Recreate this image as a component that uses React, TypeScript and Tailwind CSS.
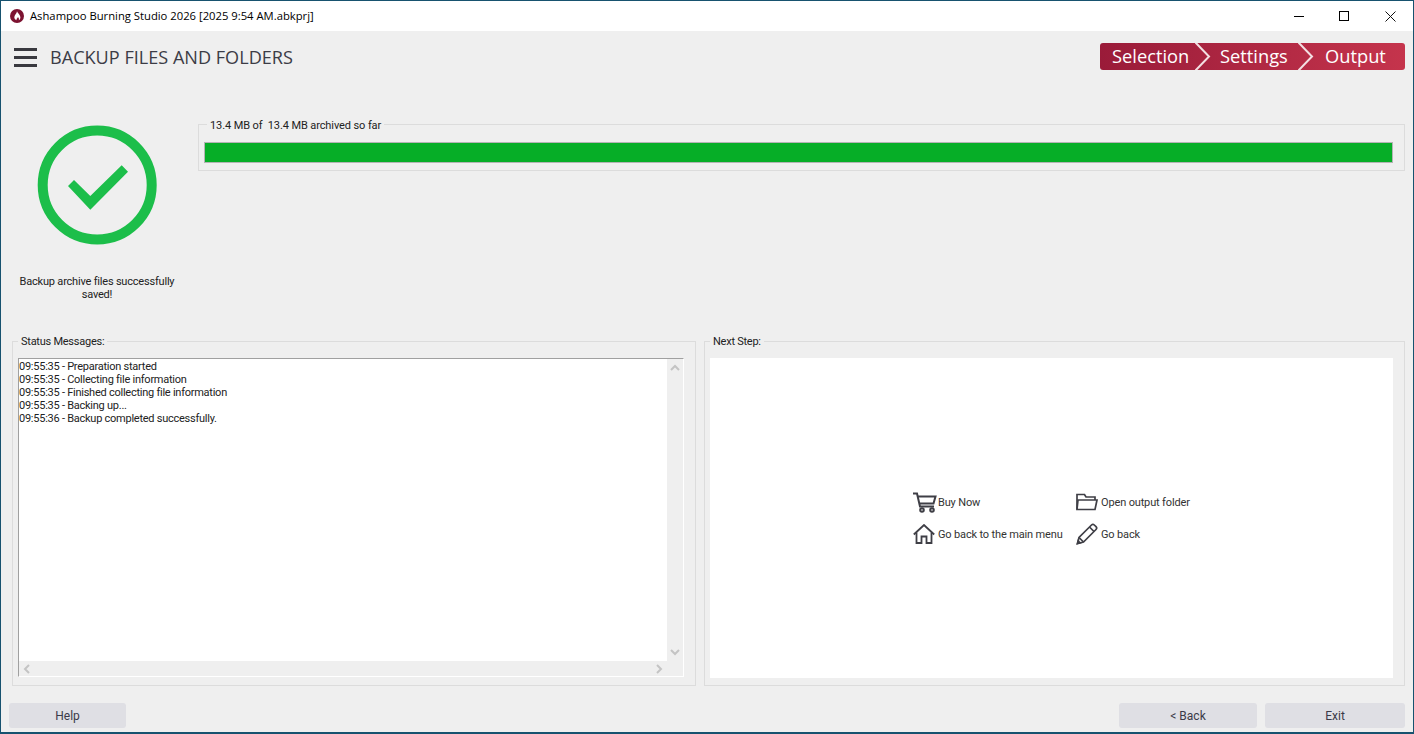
import { ReactNode } from 'react';

const logLines = [
  '09:55:35 - Preparation started',
  '09:55:35 - Collecting file information',
  '09:55:35 - Finished collecting file information',
  '09:55:35 - Backing up...',
  '09:55:36 - Backup completed successfully.',
];

const AppLogo = () => (
  <svg width="14" height="14" viewBox="0 0 14 14" className="shrink-0">
    <circle cx="7" cy="7" r="7" fill="#7c1230" />
    <path d="M7 2.200c.3 1.600 3.400 3.300 3.400 6.200 0 1.200-.6 2.300-1.600 2.900.4-1.100.1-2.200-.9-3.200-.3 1-.9 1.300-1.300 2.100-.2.4-.2.8-.1 1.100-1.300-.6-2.200-1.700-2.200-3.100 0-2.400 2.500-3.500 2.700-6z" fill="#fff" />
  </svg>
);

const CartIcon = () => (
  <svg width="24" height="21" viewBox="0 0 24 21" fill="none" stroke="#3f3f46" strokeWidth="2">
    <path d="M0 1.500h4l3 13h14" />
    <path d="M5 4.500h17.500l-2 7H6.500" />
    <circle cx="9" cy="18" r="1.800" />
    <circle cx="19" cy="18" r="1.800" />
  </svg>
);

const FolderIcon = () => (
  <svg width="22" height="18" viewBox="0 0 22 18" fill="none" stroke="#3f3f46" strokeWidth="1.700">
    <path d="M1 16.500V1.500h7.500l1.500 2.500h9v3" />
    <path d="M1 16.500l1-9.500h19l-2 9.500z" />
  </svg>
);

const HomeIcon = () => (
  <svg width="22" height="20" viewBox="0 0 22 20" fill="none" stroke="#3f3f46" strokeWidth="1.800">
    <path d="M.8 10.500L11 1l10.200 9.500" />
    <path d="M3.500 8.500V19h5v-6.500h5V19h5V8.500" />
  </svg>
);

const PencilIcon = () => (
  <svg width="22" height="22" viewBox="0 0 22 22" fill="none" stroke="#3f3f46" strokeWidth="1.700">
    <path d="M1.500 20.500l1.500-6L15.500 2a2 2 0 0 1 2.800 0l1.700 1.700a2 2 0 0 1 0 2.800L7.500 19z" />
    <path d="M3 14.500L7.500 19" />
    <path d="M13.500 4l4.500 4.500" />
    <path d="M1.500 20.500l2.500-.7-1.800-1.800z" fill="#3f3f46" />
  </svg>
);

const CheckBadge = () => (
  <svg width="120" height="120" viewBox="0 0 120 120" fill="none">
    <circle cx="60.200" cy="60" r="54.500" stroke="#1cbe4a" strokeWidth="10" />
    <polygon points="31,61 37,55 53.300,71 84.700,40.300 91,46.700 53.300,84.700" fill="#1cbe4a" />
  </svg>
);

const Chevron = ({ dir }: { dir: 'up' | 'down' | 'left' | 'right' }) => {
  const paths = {
    up: 'M1 6l4-4 4 4',
    down: 'M1 2l4 4 4-4',
    left: 'M6 1L2 5l4 4',
    right: 'M2 1l4 4-4 4',
  };
  const vertical = dir === 'up' || dir === 'down';
  return (
    <svg
      width={vertical ? 10 : 8}
      height={vertical ? 8 : 10}
      viewBox={vertical ? '0 0 10 8' : '0 0 8 10'}
      fill="none"
      stroke="#c4c4c4"
      strokeWidth="2"
    >
      <path d={paths[dir]} />
    </svg>
  );
};

const Group = ({
  title,
  legendClass,
  className,
  children,
}: {
  title: string;
  legendClass: string;
  className: string;
  children: ReactNode;
}) => (
  <fieldset className={`border border-[#dcdcdc] ${className}`}>
    <legend className={`whitespace-pre px-[3px] text-[11px] leading-[14px] text-[#222] ${legendClass}`}>{title}</legend>
    {children}
  </fieldset>
);

const FooterButton = ({ label, className }: { label: string; className: string }) => (
  <button className={`h-[25px] rounded-[3px] bg-[#dfdfe4] text-[12px] text-[#3a3a48] ${className}`}>{label}</button>
);

const NextAction = ({ icon, label }: { icon: ReactNode; label: string }) => (
  <div className="flex h-[32px] items-center">
    <div className="flex w-[25px] shrink-0 justify-start">{icon}</div>
    <span className="whitespace-nowrap pt-[2px] text-[11px] tracking-[-0.15px] text-[#333]">{label}</span>
  </div>
);

export default function App() {
  return (
    <div className="flex h-[734px] w-[1414px] flex-col overflow-hidden border border-b-2 border-[#17526f] bg-[#efefef] font-['Roboto',sans-serif]">
      {/* title bar */}
      <div className="flex h-[30px] shrink-0 items-center bg-white pl-[9px]">
        <AppLogo />
        <span className="ml-[6px] font-['Open_Sans',sans-serif] text-[11.25px] text-black">
          Ashampoo Burning Studio 2026 [2025 9:54 AM.abkprj]
        </span>
        <div className="ml-auto flex items-center">
          <div className="flex w-[45px] justify-center">
            <div className="h-px w-[10px] bg-black" />
          </div>
          <div className="flex w-[46px] justify-center">
            <div className="h-[10px] w-[10px] border border-black" />
          </div>
          <div className="flex w-[46px] justify-center">
            <svg width="11" height="11" viewBox="0 0 11 11" stroke="#111" strokeWidth="1">
              <path d="M.5.5l10 10M10.500.5l-10 10" />
            </svg>
          </div>
        </div>
      </div>

      {/* header */}
      <div className="flex h-[53px] shrink-0 items-center pl-[13px] pr-[8px]">
        <div className="flex w-[23px] flex-col gap-[5px]">
          <div className="h-[3px] bg-[#39393f]" />
          <div className="h-[3px] bg-[#39393f]" />
          <div className="h-[3px] bg-[#39393f]" />
        </div>
        <h1 className="ml-[13px] font-['Open_Sans',sans-serif] text-[18.1px] font-normal text-[#3c3c46]">
          BACKUP FILES AND FOLDERS
        </h1>
        <div className="relative mb-[2px] ml-auto flex h-[27px] w-[305px] items-center rounded-[3px] bg-gradient-to-r from-[#9a1b39] to-[#c5344c] pb-[1px] font-['Open_Sans',sans-serif] text-[18.3px] text-white">
          <span className="ml-[12px] w-[108px]">Selection</span>
          <span className="w-[105px]">Settings</span>
          <span>Output</span>
          <svg className="absolute left-[95px] top-0" width="16" height="27" viewBox="0 0 16 27" fill="none" stroke="#f3dfe2" strokeWidth="2">
            <path d="M0 -1l14 14.500L0 28" />
          </svg>
          <svg className="absolute left-[198px] top-0" width="16" height="27" viewBox="0 0 16 27" fill="none" stroke="#f3dfe2" strokeWidth="2">
            <path d="M0 -1l14 14.500L0 28" />
          </svg>
        </div>
      </div>

      {/* progress row */}
      <div className="flex h-[249px] shrink-0 pl-[11px] pr-[8px]">
        <div className="flex w-[170px] shrink-0 flex-col items-center pt-[41px]">
          <CheckBadge />
          <p className="mt-[30px] w-[170px] text-center text-[11px] leading-[13px] tracking-[-0.2px] text-[#222]">
            Backup archive files successfully saved!
          </p>
        </div>
        <Group
          title="13.4 MB of  13.4 MB archived so far"
          legendClass="ml-[3px] pt-[4px] tracking-[-0.1px]"
          className="ml-[16px] mt-[31px] h-[56px] flex-1 self-start px-[5px] pt-[9px]"
        >
          <div className="mr-[6px] h-[21px] border border-[#b4b4b4] bg-[#06ae27]" />
        </Group>
      </div>

      {/* log + next step */}
      <div className="flex h-[353px] shrink-0 gap-[8px] pl-[11px] pr-[8px]">
        <Group
          title="Status Messages:"
          legendClass="ml-0 pt-[2px] tracking-[-0.25px]"
          className="flex h-[353px] w-[684px] flex-col px-[5px] pt-[9px]"
        >
          <div className="mr-[6px] flex h-[319px] flex-col border border-t-[#a0a0a0] border-l-[#a0a0a0] border-r-white border-b-white bg-[#efefef]">
            <div className="flex h-[302px] shrink-0">
              <div className="flex-1 bg-white pt-[1px] text-[11px] leading-[13px] tracking-[-0.25px] text-[#222]">
                {logLines.map((line) => (
                  <div key={line}>{line}</div>
                ))}
              </div>
              <div className="flex w-[16px] flex-col items-center justify-between py-[5px]">
                <Chevron dir="up" />
                <Chevron dir="down" />
              </div>
            </div>
            <div className="flex h-[15px] w-[648px] items-center justify-between px-[4px]">
              <Chevron dir="left" />
              <Chevron dir="right" />
            </div>
          </div>
        </Group>
        <Group
          title="Next Step:"
          legendClass="ml-0 pt-[2px] tracking-[-0.25px]"
          className="flex h-[353px] flex-1 flex-col px-[5px] pt-[9px]"
        >
          <div className="mr-[6px] flex h-[320px] items-center justify-center bg-white">
            <div className="grid grid-cols-[163px_114px]">
              <NextAction icon={<CartIcon />} label="Buy Now" />
              <NextAction icon={<FolderIcon />} label="Open output folder" />
              <NextAction icon={<HomeIcon />} label="Go back to the main menu" />
              <NextAction icon={<PencilIcon />} label="Go back" />
            </div>
          </div>
        </Group>
      </div>

      {/* footer */}
      <div className="flex flex-1 items-start pl-[8px] pr-[8px] pt-[17px]">
        <FooterButton label="Help" className="w-[117px]" />
        <FooterButton label="< Back" className="ml-auto w-[138px]" />
        <FooterButton label="Exit" className="ml-[8px] w-[140px]" />
      </div>
    </div>
  );
}
